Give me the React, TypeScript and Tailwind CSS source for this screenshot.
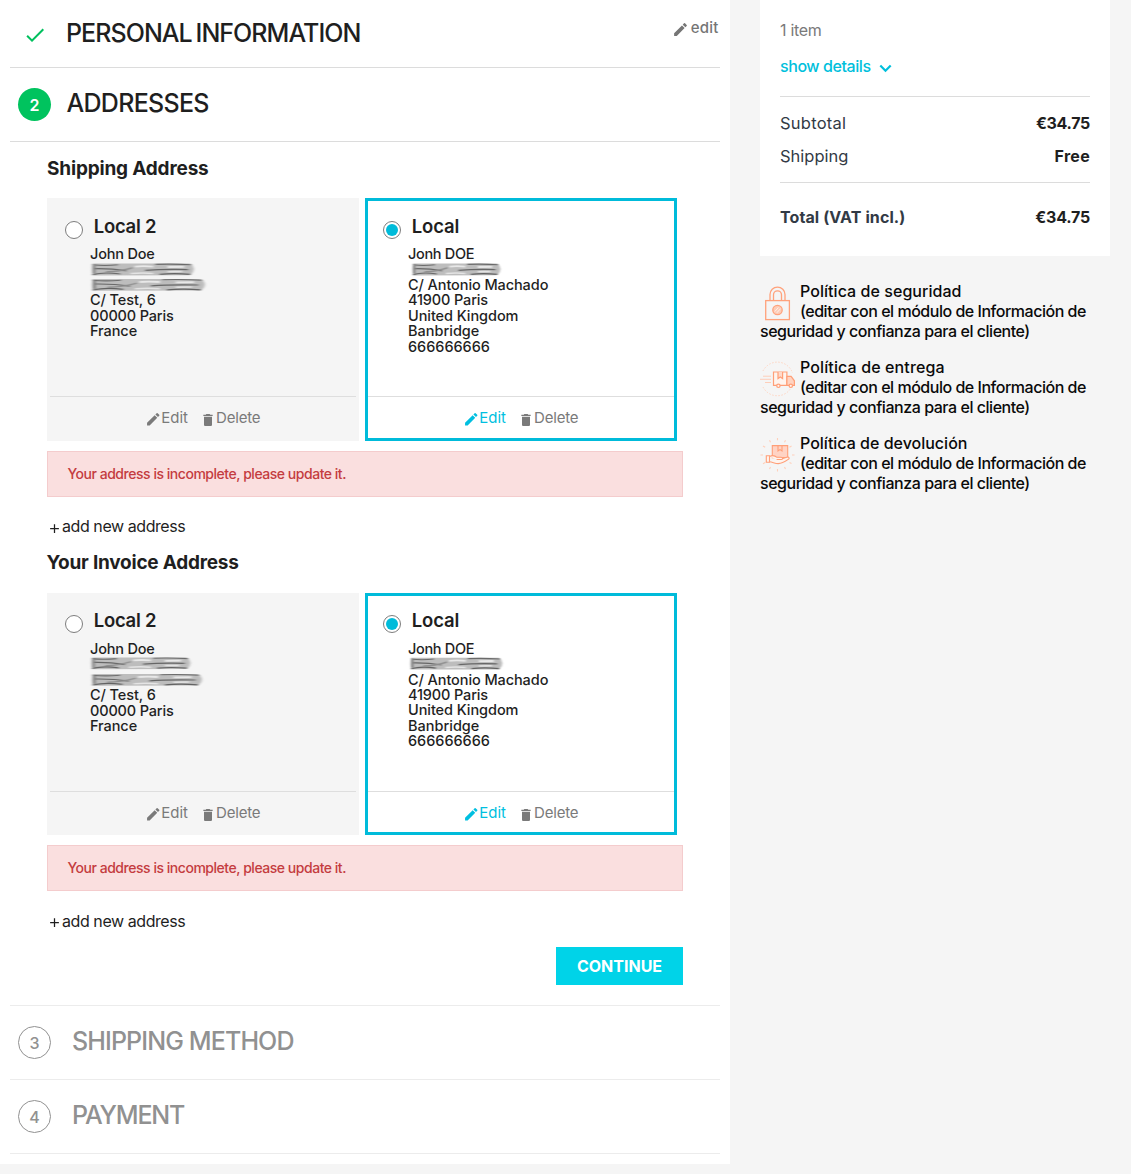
import type { ReactNode } from "react";
import { MdAdd, MdCheck, MdDelete, MdEdit } from "react-icons/md";

type Line = { text: string; cls: string } | { smudge: "a" | "b" | "c" | "d" | "e" | "f" };

const SMUDGES = {
  a: { w: 103, x: 0.5, y: 2.4 },
  b: { w: 114, x: 0.5, y: 1.8 },
  c: { w: 89, x: 3, y: 2.4 },
  d: { w: 100, x: 0, y: 1.2 },
  e: { w: 111, x: 0.5, y: 1.8 },
  f: { w: 93, x: 1, y: 1.6 },
};

/* Hand-smeared strip that hides a private line of an address. */
function Smudge({ kind }: { kind: keyof typeof SMUDGES }) {
  const { w, x, y } = SMUDGES[kind];
  const s = w / 100;
  return (
    <svg width="130" height="15.45" viewBox="0 0 130 15.45" className="block overflow-visible">
      <defs>
        <filter id={`soft-${kind}`} x="-10%" y="-30%" width="120%" height="160%">
          <feGaussianBlur stdDeviation="1.4 0.6" />
        </filter>
      </defs>
      <g transform={`translate(${x + 1} ${y}) scale(${s} 1)`} fill="none" filter={`url(#soft-${kind})`}>
        <path d="M1 .2 L96 .2 Q103 5.5 96 11.8 L1 12 Q0 6 1 .2Z" fill="#bdbdbd" />
        <path d="M1 1.4 Q12 2.8 26 1.4 M62 1 Q80 .4 97 1.4" stroke="#6b6b6b" strokeWidth="1.1" />
        <path d="M4 5.2 Q20 5 34 7.4 M52 7 Q70 5.6 94 6.2" stroke="#666" strokeWidth="1.2" />
        <path d="M1 11.2 Q12 8.4 28 10.6 M66 11 Q80 9.6 96 11" stroke="#626262" strokeWidth="1.2" />
        <path d="M2.5 2 V10" stroke="#777" strokeWidth="2.4" />
        <path d="M14 8.4 Q26 8.6 40 4.4" stroke="#8f8f8f" strokeWidth="1.4" />
        <path d="M42 3.2 Q50 2.4 60 3.2 M74 3.6 L90 3.4" stroke="#e8e8e8" strokeWidth="1.8" />
        <path d="M38 10 Q50 9 60 10 M74 8.4 L88 8.2" stroke="#e4e4e4" strokeWidth="1.5" />
      </g>
    </svg>
  );
}

function AddressCard({
  title,
  titleCls,
  lines,
  selected = false,
  size,
  radioCls,
  textCls,
  footCls,
}: {
  title: string;
  titleCls: string;
  lines: Line[];
  selected?: boolean;
  size: string;
  radioCls: string;
  textCls: string;
  footCls: string;
}) {
  return (
    <article
      className={`flex w-[312px] flex-col border-[3px] ${size} ${
        selected ? "border-[#00bbda] bg-white" : "border-[#f5f5f5] bg-[#f5f5f5]"
      }`}
    >
      <div className={`flex h-[45px] items-start pl-[15px] ${radioCls}`}>
        <span className="mt-[4px] flex size-[18px] items-center justify-center rounded-full border border-[#7d7d7d] bg-white">
          {selected && <span className="size-[12px] rounded-full bg-[#00bbda]" />}
        </span>
        <span className={`ml-[10.7px] text-[18.5px] leading-[19px] font-semibold whitespace-nowrap ${titleCls}`}>{title}</span>
      </div>
      <div className={`flex-1 pl-[40px] text-[14.5px] font-medium whitespace-nowrap ${textCls}`}>
        {lines.map((l, i) =>
          "smudge" in l ? (
            <Smudge key={i} kind={l.smudge} />
          ) : (
            <div key={i} className={l.cls}>
              {l.text}
            </div>
          ),
        )}
      </div>
      <footer
        className={`flex items-center justify-center border-t border-[#dedede] text-[15px] leading-none text-[#7a7a7a] ${footCls}`}
      >
        <span className={`flex items-center ${selected ? "text-[#00bfe0]" : ""}`}>
          <MdEdit size={16.5} className="mt-[4px]" />
          <span className="tracking-[0.05px]">Edit</span>
        </span>
        <span className="ml-[12px] flex items-center">
          <MdDelete size={16} className="mt-[4px]" />
          <span className="mr-px tracking-[-0.2px]">Delete</span>
        </span>
      </footer>
    </article>
  );
}

function AddressGroup({
  smudges,
  ...box
}: {
  size: string;
  radioCls: string;
  textCls: string;
  footCls: string;
  smudges: ["a" | "d", "b" | "e", "c" | "f"];
}) {
  return (
    <div className="flex gap-[6px]">
      <AddressCard
        {...box}
        title="Local 2"
        titleCls="tracking-[-0.25px]"
        lines={[
          { text: "John Doe", cls: "tracking-[-0.2px]" },
          { smudge: smudges[0] },
          { smudge: smudges[1] },
          { text: "C/ Test, 6", cls: "tracking-[-0.1px]" },
          { text: "00000 Paris", cls: "tracking-[-0.17px]" },
          { text: "France", cls: "tracking-[-0.08px]" },
        ]}
      />
      <AddressCard
        {...box}
        selected
        title="Local"
        titleCls="tracking-[-0.1px]"
        lines={[
          { text: "Jonh DOE", cls: "tracking-[-0.33px]" },
          { smudge: smudges[2] },
          { text: "C/ Antonio Machado", cls: "tracking-[-0.09px]" },
          { text: "41900 Paris", cls: "tracking-[-0.15px]" },
          { text: "United Kingdom", cls: "tracking-[-0.07px]" },
          { text: "Banbridge", cls: "" },
          { text: "666666666", cls: "tracking-[-0.03px]" },
        ]}
      />
    </div>
  );
}

function Alert() {
  return (
    <div className="mt-[10px] flex h-[46px] items-center border border-[#f4cccd] bg-[#fadfdf] pb-[2px] pl-[19.5px] text-[14px] font-medium tracking-[-0.47px] text-[#c43c40]">
      Your address is incomplete, please update it.
    </div>
  );
}

function AddLink({ className, iconCls }: { className: string; iconCls: string }) {
  return (
    <a className={`flex h-[24px] items-center text-[16px] tracking-[-0.43px] ${className}`}>
      <MdAdd size={15} className={iconCls} />
      add new address
    </a>
  );
}

function ClosedStep({ n, title, cls }: { n: number; title: string; cls: string }) {
  return (
    <div className="flex h-[74px] items-center border-b border-[#ececec] pl-[8px] text-[#919191]">
      <span className="flex size-[33px] items-center justify-center rounded-full border border-[#919191] text-[16px] font-medium">{n}</span>
      <h2 className={`-mt-[2px] ml-[21px] text-[25px] leading-none font-medium ${cls}`}>{title}</h2>
    </div>
  );
}

function LockIcon() {
  return (
    <svg width="36" height="36" viewBox="0 0 36 36" fill="none" stroke="#ffa27c" strokeWidth="1.3">
      <path d="M10 15.5V9.6a7.5 7.5 0 0 1 15 0v5.9M13.5 15.5V9.8a4 4 0 0 1 8 0v5.7" />
      <rect x="5.7" y="15.6" width="23.7" height="19" />
      <circle cx="17.5" cy="25" r="4.7" fill="#fdcdb8" />
      <path d="M14.8 26.5l3.6-4M16.8 27.8l3.8-4.2" stroke="#fff" strokeWidth=".7" />
    </svg>
  );
}

function TruckIcon() {
  return (
    <svg width="36" height="36" viewBox="0 0 36 36" fill="none" stroke="#ff9f78" strokeWidth="1.2">
      <path d="M3 10A16 16 0 0 1 32.5 12M3 26a16 16 0 0 0 29-1" stroke="#ffd0bb" strokeWidth=".9" strokeDasharray="1.5 1.6" />
      <path d="M3 15.2h8M0 18.3h11M5 21.5h6" stroke="#ffc9b2" strokeWidth=".9" />
      <path d="M13.5 11h13.4v13.4H13.5z" fill="#fff4ee" />
      <path d="M26.9 15.4h4.2l3.3 4.4v4.6h-7.5z" fill="#ffd3c1" />
      <path d="M18 11v6.6l2.3-1.6 2.3 1.6V11" fill="#ffd9c9" />
      <circle cx="18.4" cy="24.8" r="1.7" fill="#fff4ee" />
      <circle cx="30.8" cy="24.8" r="1.7" fill="#fff4ee" />
    </svg>
  );
}

function HandIcon() {
  return (
    <svg width="36" height="36" viewBox="0 0 36 36" fill="none" stroke="#ff9f78" strokeWidth="1.1">
      <path
        d="M17.5 1v2.2M25.5 3.2l-1 2M9.5 3.2l1 2M31.5 9l-2 1.2M3 9l2.2 1.2M32 18h2.5M.5 18h2.5M31.5 26.5l-2-1M3 26.8l2.2-1.2M25.5 32l-1-2M9.5 32l1-2M17.5 34.5v-2.4"
        stroke="#ffd0bb"
      />
      <path d="M12.3 8.6h15.4v12H12.3z" fill="#ffd3c4" />
      <path d="M18 8.6v5.4l2-1.4 2 1.4V8.6" />
      <path d="M6.3 18.8h3.2v6.4H6.3z" fill="#fff4ee" />
      <path
        d="M9.5 19.4c3-1.3 5.5-.8 7.5.9h4.2c1.8 0 1.8 2.2 0 2.2h-4.6M22.2 21.8l5.2-1.7c1.6-.4 2.4 1.2 1.1 2.1-3.5 2.4-6.3 4.4-10.2 4.4-3.3 0-5.8-1.6-8.8-1.8"
        fill="#fff4ee"
      />
    </svg>
  );
}

function Policy({ icon, title, cls }: { icon: ReactNode; title: string; cls: string }) {
  return (
    <div className="mb-[16px] h-[60px] text-[16px] leading-[20px] font-medium whitespace-nowrap text-[#0a0a0a]">
      <div className="float-left h-[39px] w-[40px] pt-[4px]">{icon}</div>
      <div className={cls}>{title}</div>
      <div className="tracking-[-0.48px]">(editar con el módulo de Información de</div>
      <div className="tracking-[-0.46px]">seguridad y confianza para el cliente)</div>
    </div>
  );
}

export default function App() {
  return (
    <div className="flex h-[1174px] w-[1131px] items-start overflow-hidden bg-[#f5f5f5] font-['Inter',sans-serif] text-[#1f1f1f]">
      <main className="h-[1164px] w-[730px] bg-white px-[10px]">
        <div className="flex h-[68px] items-start border-b border-[#dcdcdc] pl-[13px]">
          <MdCheck size={24} className="mt-[23px] text-[#00c05e]" />
          <h2 className="mt-[20.5px] ml-[19px] text-[25px] leading-[25px] font-medium tracking-[-0.95px] [word-spacing:-2px]">
            PERSONAL INFORMATION
          </h2>
          <a className="mt-[18px] mr-[1.5px] ml-auto flex items-center text-[15px] leading-[20px] font-medium text-[#757575]">
            <MdEdit size={17} className="mt-[2px] mr-[2px]" />
            <span className="tracking-[0.2px]">edit</span>
          </a>
        </div>
        <div className="flex h-[74px] items-center border-b border-[#dcdcdc] pl-[8px]">
          <span className="flex size-[33px] items-center justify-center rounded-full bg-[#00c35e] text-[16px] font-semibold text-white">2</span>
          <h2 className="-mt-[3px] ml-[15.5px] text-[25px] leading-none font-medium tracking-[-0.7px]">ADDRESSES</h2>
        </div>

        <section className="h-[864px] border-b border-[#ececec] pr-[37px] pl-[37px]">
          <h3 className="mb-[3px] flex h-[53px] items-center pt-[2px] text-[19px] font-bold tracking-[-0.18px]">Shipping Address</h3>
          <AddressGroup
            size="h-[243px]"
            radioCls="pt-[16px]"
            textCls="leading-[15.45px]"
            footCls="h-[42px]"
            smudges={["a", "b", "c"]}
          />
          <Alert />
          <AddLink className="mt-[17px]" iconCls="mt-[4px]" />
          <h3 className="mb-[7px] -ml-[0.5px] flex h-[48px] items-center pt-[2px] text-[19px] font-bold tracking-[-0.23px]">
            Your Invoice Address
          </h3>
          <AddressGroup
            size="h-[242px]"
            radioCls="pt-[15px]"
            textCls="leading-[15.35px]"
            footCls="h-[41px] pt-px"
            smudges={["d", "e", "f"]}
          />
          <Alert />
          <AddLink className="mt-[18px]" iconCls="mt-[2px]" />
          <button className="mt-[14px] ml-auto flex h-[38px] w-[127px] items-center justify-center bg-[#00d3e8] text-[16px] font-bold text-white">
            CONTINUE
          </button>
        </section>

        <ClosedStep n={3} title="SHIPPING METHOD" cls="tracking-[-0.88px]" />
        <ClosedStep n={4} title="PAYMENT" cls="tracking-[-1.2px]" />
      </main>

      <aside className="ml-[30px] w-[350px]">
        <section className="h-[256px] bg-white px-[20px] pt-[20px]">
          <div className="h-[20px] text-[16px] leading-[20px] tracking-[-0.3px] text-[#7a7a7a]">1 item</div>
          <a className="mt-[14px] flex h-[24px] items-center text-[16px] font-medium tracking-[-0.43px] text-[#00bfdc]">
            show details
            <svg
              width="13"
              height="9"
              viewBox="0 0 13 9"
              fill="none"
              stroke="currentColor"
              strokeWidth="2.2"
              className="mt-[4px] ml-[8px]"
            >
              <path d="M1.3 1.5 6.5 6.7 11.7 1.5" />
            </svg>
          </a>
          <div className="mt-[18px] h-[87px] border-y border-[#dcdcdc] pt-[10px] text-[16.5px] leading-[33px] text-[#323a45]">
            <div className="flex h-[33px] justify-between">
              <span className="tracking-[0.25px]">Subtotal</span>
              <span className="text-[16px] font-bold tracking-[-0.3px] text-[#1f1f1f]">€34.75</span>
            </div>
            <div className="flex h-[33px] justify-between">
              <span>Shipping</span>
              <span className="text-[16px] font-bold tracking-[0.3px] text-[#1f1f1f]">Free</span>
            </div>
          </div>
          <div className="flex h-[68px] items-center justify-between text-[16px] font-bold">
            <span className="tracking-[0.1px] text-[#323a45]">Total (VAT incl.)</span>
            <span className="tracking-[-0.2px]">€34.75</span>
          </div>
        </section>
        <section className="mt-[25px]">
          <Policy icon={<LockIcon />} title="Política de seguridad" cls="tracking-[0.05px]" />
          <Policy icon={<TruckIcon />} title="Política de entrega" cls="tracking-[0.12px]" />
          <Policy icon={<HandIcon />} title="Política de devolución" cls="" />
        </section>
      </aside>
    </div>
  );
}
